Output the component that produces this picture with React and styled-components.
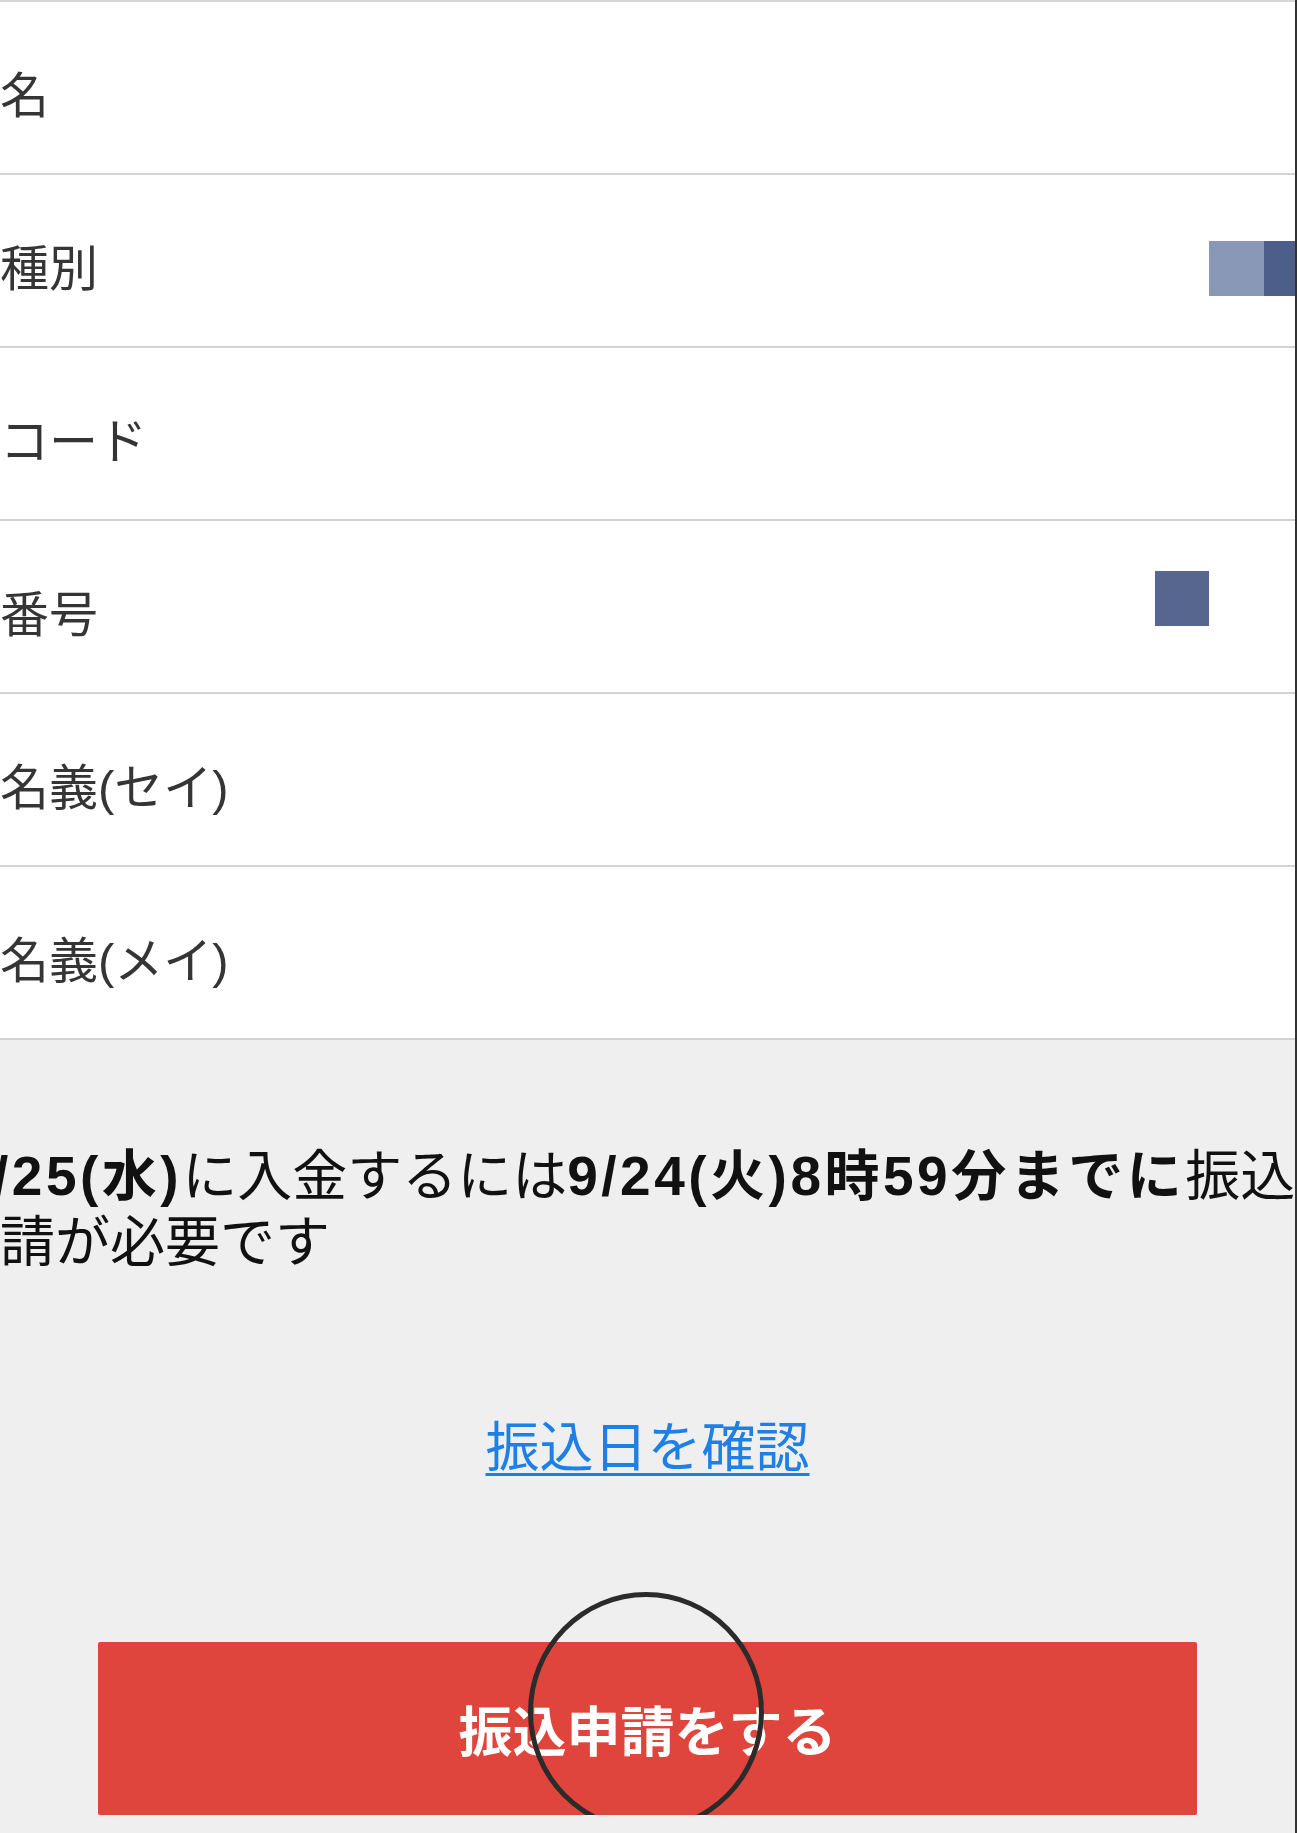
import styled, { createGlobalStyle } from 'styled-components'

const GlobalStyle = createGlobalStyle`
  html, body {
    margin: 0;
    padding: 0;
    background: #efefef;
    overflow: hidden;
  }
  body {
    font-family: "Liberation Sans", "Noto Sans CJK JP", sans-serif;
  }
`

const Page = styled.div`
  width: 1297px;
  height: 1833px;
  box-sizing: border-box;
  border-right: 2px solid #333;
  background: #efefef;
  display: flex;
  flex-direction: column;
  overflow: hidden;
`

const FormList = styled.div`
  background: #fff;
  border-top: 2px solid #d6d6d6;
`

const Row = styled.div`
  height: 171px;
  border-bottom: 2px solid #d3d3d3;
  display: flex;
  align-items: center;
  justify-content: space-between;
  padding-right: ${(p) => p.$inset || 0}px;
`

const Label = styled.span`
  padding-top: 18px;
  font-size: 49px;
  color: #353535;
  line-height: 1;
`

const Masks = styled.div`
  display: flex;
  margin-top: ${(p) => p.$shift || 0}px;
`

const Mask = styled.div`
  width: ${(p) => p.$w}px;
  height: 55px;
  background: ${(p) => p.$color};
`

const Notice = styled.section`
  padding-top: 103px;
  display: flex;
  flex-direction: column;
  align-items: center;
  overflow: hidden;
`

const Message = styled.p`
  align-self: stretch;
  margin: 0 0 0 -55px;
  text-indent: 14px;
  font-size: 55px;
  line-height: 66px;
  color: #111;
  white-space: nowrap;

  b {
    font-weight: 700;
    letter-spacing: 3.5px;
  }
`

const DateLink = styled.a`
  margin-top: 136px;
  font-family: "Noto Sans CJK JP", sans-serif;
  font-size: 54px;
  line-height: 66px;
  color: #1e7fe6;
  text-decoration: underline;
  text-decoration-thickness: 3px;
  text-underline-offset: 6px;
  cursor: pointer;
`

const ButtonWrap = styled.div`
  position: relative;
  margin-top: 165px;
`

const SubmitButton = styled.button`
  width: 1099px;
  height: 173px;
  border: none;
  border-radius: 2px;
  background: #e0453d;
  color: #fff;
  font-family: "Noto Sans CJK JP", sans-serif;
  font-size: 54px;
  font-weight: 700;
  display: flex;
  align-items: center;
  justify-content: center;
  cursor: pointer;
`

const TapMark = styled.div`
  position: absolute;
  left: 430px;
  top: -50px;
  width: 236px;
  height: 240px;
  box-sizing: border-box;
  border: 5px solid #2b2b2b;
  border-radius: 50%;
  pointer-events: none;
`

const rows = [
  { label: '名' },
  {
    label: '種別',
    masks: [
      { w: 55, color: '#8998b6' },
      { w: 31, color: '#4e5e8a' },
    ],
    shift: 16,
  },
  { label: 'コード' },
  { label: '番号', masks: [{ w: 54, color: '#56668f' }], inset: 86, shift: -16 },
  { label: '名義(セイ)' },
  { label: '名義(メイ)' },
]

export default function App() {
  return (
    <>
      <GlobalStyle />
      <Page>
        <FormList>
          {rows.map((r) => (
            <Row key={r.label} $inset={r.inset}>
              <Label>{r.label}</Label>
              {r.masks && (
                <Masks $shift={r.shift}>
                  {r.masks.map((m, i) => (
                    <Mask key={i} $w={m.w} $color={m.color} />
                  ))}
                </Masks>
              )}
            </Row>
          ))}
        </FormList>

        <Notice>
          <Message>
            <b>9/25(水)</b>に入金するには<b>9/24(火)8時59分までに</b>振込
            <br />
            申請が必要です
          </Message>

          <DateLink>振込日を確認</DateLink>

          <ButtonWrap>
            <SubmitButton>振込申請をする</SubmitButton>
            <TapMark />
          </ButtonWrap>
        </Notice>
      </Page>
    </>
  )
}
